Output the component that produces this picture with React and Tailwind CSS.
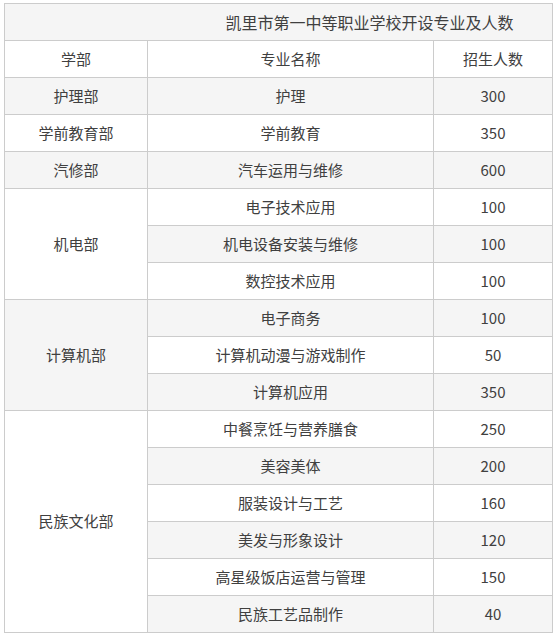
import React from "react";

const rows = [
  { dept: "护理部", span: 1, major: "护理", count: "300" },
  { dept: "学前教育部", span: 1, major: "学前教育", count: "350" },
  { dept: "汽修部", span: 1, major: "汽车运用与维修", count: "600" },
  { dept: "机电部", span: 3, major: "电子技术应用", count: "100" },
  { major: "机电设备安装与维修", count: "100" },
  { major: "数控技术应用", count: "100" },
  { dept: "计算机部", span: 3, major: "电子商务", count: "100" },
  { major: "计算机动漫与游戏制作", count: "50" },
  { major: "计算机应用", count: "350" },
  { dept: "民族文化部", span: 6, major: "中餐烹饪与营养膳食", count: "250" },
  { major: "美容美体", count: "200" },
  { major: "服装设计与工艺", count: "160" },
  { major: "美发与形象设计", count: "120" },
  { major: "高星级饭店运营与管理", count: "150" },
  { major: "民族工艺品制作", count: "40" },
];

const cell = "border border-[#cccccc] text-center align-middle p-0";

export default function App() {
  return (
    <div
      className="bg-white pl-[4px] pt-[3px] text-[15px] text-[#404040]"
      style={{ fontFamily: '"Noto Sans CJK SC", "Noto Sans", sans-serif' }}
    >
      <table className="w-[548px] table-fixed border-collapse">
        <colgroup>
          <col className="w-[143px]" />
          <col className="w-[286px]" />
          <col className="w-[119px]" />
        </colgroup>
        <tbody>
          <tr className="h-[37px] bg-[#f5f5f5]">
            <td colSpan={3} className={`${cell} pl-[182px] text-[16px]`}>
              凯里市第一中等职业学校开设专业及人数
            </td>
          </tr>
          <tr className="h-[37px] bg-white">
            <td className={cell}>学部</td>
            <td className={cell}>专业名称</td>
            <td className={cell}>招生人数</td>
          </tr>
          {rows.map((r, i) => (
            <tr
              key={i}
              className={`h-[37px] ${i % 2 === 0 ? "bg-[#f5f5f5]" : "bg-white"}`}
            >
              {r.dept && (
                <td rowSpan={r.span} className={cell}>
                  {r.dept}
                </td>
              )}
              <td className={cell}>{r.major}</td>
              <td className={cell}>{r.count}</td>
            </tr>
          ))}
        </tbody>
      </table>
    </div>
  );
}
